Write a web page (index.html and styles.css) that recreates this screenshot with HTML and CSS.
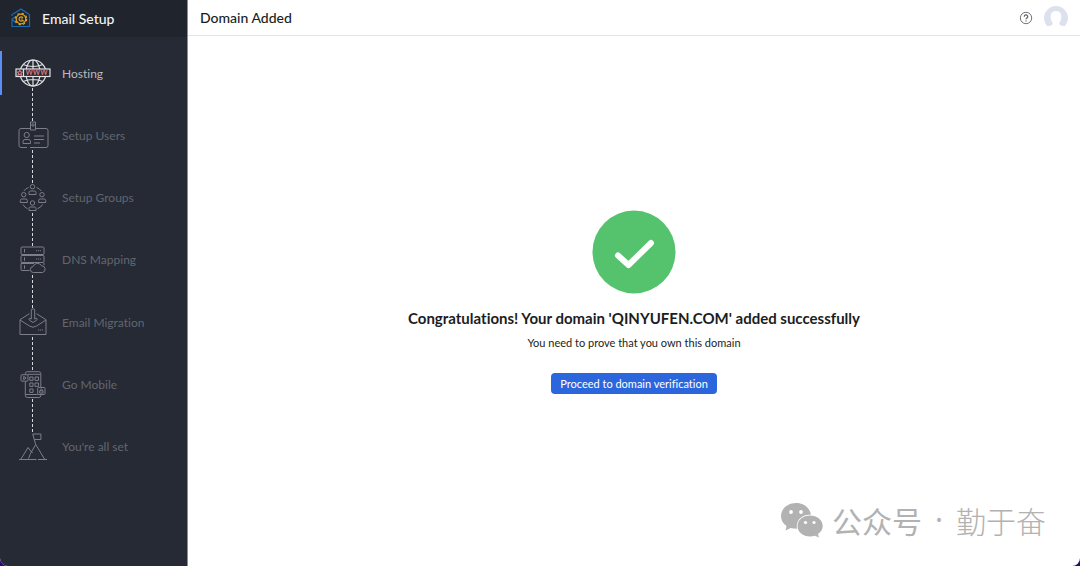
FILE: index.html
```html
<!DOCTYPE html>
<html lang="en">
<head>
<meta charset="utf-8">
<title>Email Setup</title>
<link rel="stylesheet" href="styles.css">
</head>
<body>
<div class="app">
  <aside class="sidebar">
    <div class="brand">
      <svg class="brand-icon" viewBox="0 0 20 20" fill="none" aria-hidden="true">
        <path d="M3 5.500 10 1l8.500 5.500V18.500H1V11l3-2.200M1 8V6.500L4 4.800M1 11l4 4" stroke="#1b6bb2" stroke-width="1.200"/>
        <circle cx="10" cy="11" r="4.800" stroke="#e0a320" stroke-width="1.200"/>
        <circle cx="10" cy="11" r="5.700" stroke="#e0a320" stroke-width="1.200" stroke-dasharray="2.240 2.240"/>
        <path d="M11.900 9.800a2.100 2.100 0 1 0-.3 2.700l1.300.700M9.800 11h2" stroke="#e0a320" stroke-width="1.200"/>
      </svg>
      <span>Email Setup</span>
    </div>
    <nav aria-label="Setup steps">
      <ol class="steps">
        <li class="step active"><a href="#hosting">
          <svg class="step-icon" viewBox="0 0 36 36" aria-hidden="true">
            <circle cx="18" cy="18" r="13"/><ellipse cx="18" cy="18" rx="7" ry="13"/><path d="M18 5v26M8 9.500q10 4 20 0M8 26.500q10-4 20 0"/>
            <rect class="plate" x="1" y="14" width="34" height="7.500"/><path d="M8.500 14v7.500"/>
            <path class="pink" d="M4.800 15.300l.8 1.500 1.700.2-1.200 1.200.4 1.900-1.700-.9-1.700.9.400-1.900L2.300 17l1.700-.2z"/>
            <text x="21.500" y="20.400" text-anchor="middle">WWW</text>
          </svg><span>Hosting</span></a></li>
        <li class="step"><a href="#users">
          <svg class="step-icon" viewBox="0 0 36 36" aria-hidden="true">
            <path d="M15.500 11.500H6q-2 0-2 2v15q0 2 2 2h6M15 30.500h16q2 0 2-2v-15q0-2-2-2H20.500M15.500 5h5v8h-5z"/><circle cx="18" cy="8" r="1.200"/>
            <circle cx="11.700" cy="18" r="2.600"/><path d="M8 26.500v-2q0-2 2-2h3.500q2 0 2 2v2zM19 19h10M19 22.500h10M19 26h6"/>
          </svg><span>Setup Users</span></a></li>
        <li class="step"><a href="#groups">
          <svg class="step-icon" viewBox="0 0 36 36" aria-hidden="true">
            <circle cx="17.500" cy="6.700" r="2.200"/><circle cx="8.700" cy="14.700" r="2.200"/><circle cx="27" cy="14.700" r="2.200"/><circle cx="17.500" cy="23" r="2.200"/>
            <path d="M14 14.500v-2q0-1.500 1.500-1.500h4q1.500 0 1.500 1.500v2zM5.300 22.500v-2q0-1.500 1.500-1.500h4q1.500 0 1.500 1.500v2zM23.700 22.500v-2q0-1.500 1.500-1.500h4q1.500 0 1.500 1.500v2zM14 30.500v-2q0-1.500 1.500-1.500h4q1.500 0 1.500 1.500v2z"/>
            <path d="M13.500 7.500q-3 1-4.700 3.500M21.500 7.500q3 1 4.700 3.500M8 24.500q1.500 3 4.500 4.200M27.500 24.500q-1.500 3-5 4.200"/>
          </svg><span>Setup Groups</span></a></li>
        <li class="step"><a href="#dns">
          <svg class="step-icon" viewBox="0 0 36 36" aria-hidden="true">
            <rect x="6" y="5" width="23" height="7.500" rx="1"/><rect x="6" y="13.500" width="23" height="7" rx="1"/><path d="M14.500 28.500H7q-1 0-1-1v-6h13M29 21v2M9.500 7v3.500M9.500 15.300v3.500M9.500 23.300v3.500"/>
            <path d="M21 8.700h5M21 17h5" stroke-dasharray="1.200 .8"/>
            <path d="M18.500 30.500a3 3 0 0 1-.3-6 4.500 4.500 0 0 1 8.300-.7 3.400 3.400 0 0 1 1 6.700z"/>
          </svg><span>DNS Mapping</span></a></li>
        <li class="step"><a href="#migration">
          <svg class="step-icon" viewBox="0 0 36 36" aria-hidden="true">
            <path d="M14.500 9.700 5 15.700v14.800h26V15.700L21.500 9.700M5 16l9.500 6q3.500 2.500 7 0L31 16"/>
            <path d="M16.300 5.500q1.700-1.500 3.400 0V15l2-.7q.8 1.200-.2 2L18 18.500l-3.500-2.200q-1-.8-.2-2l2 .7z"/><path d="M23 26h5" stroke-dasharray="1.200 .8"/>
          </svg><span>Email Migration</span></a></li>
        <li class="step"><a href="#mobile">
          <svg class="step-icon" viewBox="0 0 36 36" aria-hidden="true">
            <path d="M10.300 7.500V6.700q0-2 2-2h11.500q2 0 2 2V20M10.300 14.500v14q0 2 2 2h11.500q2 0 2-2v-.700M12.500 7.300h13M10.300 27.500h12.500"/>
            <rect x="6" y="7.700" width="7" height="6.500" rx="1"/><path d="M8.700 9.300v3.500l2.500-1.800z"/>
            <path d="M14.800 10h3.200v3.400h-3.200zM20 10h3.500v3.400H20zM14.800 16h3.200v3.400h-3.200zM20 16h3.500v3.400H20zM14.800 22h3.200v3.400h-3.200z"/>
            <rect x="22.700" y="20.500" width="7.300" height="7" rx="1"/><path d="M24.700 23.800h3.400v2.300h-3.400zM25.300 23.800v-1q1.100-1.500 2.200 0v1"/>
          </svg><span>Go Mobile</span></a></li>
        <li class="step"><a href="#done">
          <svg class="step-icon" viewBox="0 0 36 36" aria-hidden="true">
            <path d="M4 30.500h17.500M23 30.500h9M6 30l7-11.500 3.300 4.300M13.500 29.500l2-5 5.200-9L29.500 30M17.500 24l-1.500-2M20.700 15.500 17.700 5h8.200v5.500h-6.500"/>
          </svg><span>You're all set</span></a></li>
      </ol>
    </nav>
  </aside>
  <div class="content">
    <header class="topbar">
      <h1>Domain Added</h1>
      <div class="tools">
        <button class="tool" type="button" aria-label="Help">
          <svg class="help-icon" viewBox="0 0 14 14" fill="none" stroke="#62656e" aria-hidden="true"><circle cx="7" cy="7" r="5.700" stroke-width=".9"/><path d="M5.300 5.700a1.700 1.700 0 1 1 2.500 1.400Q7 7.500 7 8.300M7 9.500v1.100" stroke-width="1.300"/></svg>
        </button>
        <button class="tool" type="button" aria-label="Account">
          <svg class="avatar" viewBox="0 0 24 24" aria-hidden="true"><path fill="#dce1ed" d="M3 20A12 12 0 1 1 21 20Q18 20.500 15.500 18.500 15 17 16 15.500C18 13 18.500 5 12 5S6 13 8 15.500Q9 17 8.500 18.500 6 20.500 3 20z"/></svg>
        </button>
      </div>
    </header>
    <main class="result">
      <svg class="success" viewBox="0 0 84 84" aria-hidden="true"><circle cx="42" cy="42" r="41.500" fill="#55c26e"/><path d="M26 45.500 36.500 55 59 33" fill="none" stroke="#fff" stroke-width="6" stroke-linecap="round" stroke-linejoin="round"/></svg>
      <h2>Congratulations! Your domain 'QINYUFEN.COM' added successfully</h2>
      <p>You need to prove that you own this domain</p>
      <button class="primary" type="button">Proceed to domain verification</button>
    </main>
  </div>
  <div class="watermark" lang="zh">
    <svg class="wechat" viewBox="0 0 42 36" aria-hidden="true">
      <path fill="#b2b2b2" d="M15 1C7 1 0 6.500 0 14c0 4.200 2 7.500 5.500 10L4.500 28.500 9.500 26q3 .8 6.500.8C14.500 18 21 12.500 30 12.500 28.500 5.500 22.500 1 15 1z"/>
      <path fill="#b2b2b2" d="M29 13.500c-7 0-12.500 4.600-12.500 10.500S22 34.500 29 34.500q2.500 0 5-.8L38 35.500l-1-3.500c3-2 4.700-4.800 4.700-8 0-6-5.700-10.500-12.700-10.500z"/>
      <g fill="#fff"><circle cx="10" cy="10" r="1.900"/><circle cx="20" cy="10" r="1.900"/><circle cx="24.500" cy="20.500" r="1.600"/><circle cx="33" cy="20.500" r="1.600"/></g>
    </svg>
    <span>公众号</span><span class="dot">·</span><span class="author">勤于奋</span>
  </div>
</div>
</body>
</html>
```
FILE: styles.css
```css
* { box-sizing: border-box; }
body {
  margin: 0;
  background: #2b0a78;
  color: #1b1d22;
  font-family: Lato, "Noto Sans CJK SC", sans-serif;
  font-variant-ligatures: none;
}
h1, h2, p, ol { margin: 0; padding: 0; }
svg { display: block; flex: none; }
button { font: inherit; cursor: pointer; }

.app {
  position: relative;
  display: grid;
  grid-template-columns: 188px 1fr;
  min-height: 100vh;
  overflow: hidden;
  border-radius: 0 0 8px 8px;
  background: #fff;
}
.sidebar {
  background: #262a34;
  border-right: 1px solid #8b8e95;
}
.brand {
  display: flex;
  align-items: center;
  gap: 11px;
  height: 37px;
  padding: 0 0 1px 11px;
  background: #20242c;
  color: #f2f3f5;
  font-size: 14px;
  font-weight: 500;
}
.brand-icon { width: 20px; height: 20px; }

.steps {
  display: grid;
  grid-auto-rows: 1fr;
  height: 436px;
  margin-top: 5px;
  list-style: none;
}
.step { position: relative; display: flex; }
.step a {
  display: flex;
  flex: 1;
  align-items: center;
  gap: 11px;
  padding-left: 15px;
  color: #62666f;
  font-size: 12px;
  text-decoration: none;
}
.step.active a { color: #b9bbc0; }
.step:not(:last-child)::after {
  content: "";
  position: absolute;
  top: 46px;
  left: 32px;
  height: 33px;
  width: 1px;
  background: repeating-linear-gradient(#d5d7da 0 3px, transparent 3px 5px);
}
.step.active::before {
  content: "";
  position: absolute;
  top: 9px;
  left: 0;
  width: 2px;
  height: 44px;
  background: #5b8ff5;
}
.step-icon {
  width: 36px;
  height: 36px;
  fill: none;
  stroke: #7c7f86;
  stroke-width: 1;
}
.active .step-icon { stroke: #e2e3e5; stroke-width: 1.2; }
.step-icon .plate { fill: #262a34; }
.step-icon .pink { stroke: #d3777f; }
.step-icon text {
  fill: #d3777f;
  stroke: none;
  font-size: 7px;
  font-weight: 700;
}

.content { display: flex; flex-direction: column; }
.topbar {
  display: flex;
  align-items: center;
  justify-content: space-between;
  height: 36px;
  padding: 0 12px;
  border-bottom: 1px solid #e5e5e7;
}
h1 { font-size: 14px; font-weight: 500; }
.tools { display: flex; align-items: center; gap: 11px; }
.tool { padding: 0; border: 0; background: none; }
.help-icon { width: 14px; height: 14px; }
.avatar { width: 24px; height: 24px; }

.result {
  display: flex;
  flex: 1;
  flex-direction: column;
  align-items: center;
  justify-content: center;
  padding-top: 2px;
  text-align: center;
}
.success { width: 84px; height: 84px; }
h2 {
  margin-top: 13px;
  font-size: 15px;
  font-weight: 700;
  line-height: 22px;
}
.result p { margin-top: 6px; font-size: 11px; line-height: 16px; }
.primary {
  margin-top: 22px;
  padding: 0 9px;
  border: 0;
  border-radius: 4px;
  background: #2c66dd;
  color: #fff;
  font-size: 11px;
  line-height: 21px;
}

.watermark {
  position: absolute;
  right: 34px;
  bottom: 24px;
  display: flex;
  align-items: center;
  gap: 9px;
  color: #b2b2b2;
  font-family: "Noto Sans CJK SC", sans-serif;
  font-size: 30px;
  line-height: 44px;
}
.wechat { width: 42px; height: 36px; }
.dot { padding: 0 4px; font-family: "Noto Sans", sans-serif; }
.author { font-weight: 300; }
```
